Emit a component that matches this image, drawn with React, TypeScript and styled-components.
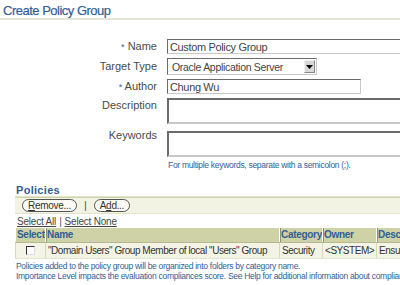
import styled, { createGlobalStyle } from "styled-components";

const GlobalStyle = createGlobalStyle`
  body {
    margin: 0;
    background: #ffffff;
    font-family: "Liberation Sans", Arial, sans-serif;
    color: #222222;
  }
`;

const blue = "#2f5f94";

export default function App() {
  return (
    <Page>
      <GlobalStyle />
      <Title>Create Policy Group</Title>

      <Form>
        <Label>
          <Req>*</Req> Name
        </Label>
        <TextInput $width={300} defaultValue="Custom Policy Group" />

        <Label>Target Type</Label>
        <Select>
          <SelectValue>Oracle Application Server</SelectValue>
          <SelectButton>
            <svg width="7" height="4" viewBox="0 0 7 4">
              <path d="M0 0h7L3.5 4z" fill="#000" />
            </svg>
          </SelectButton>
        </Select>

        <Label>
          <Req>*</Req> Author
        </Label>
        <TextInput $width={194} defaultValue="Chung Wu" />

        <Label $top>Description</Label>
        <TextArea $width={300} />

        <Label $top>Keywords</Label>
        <FieldStack>
          <TextArea $width={300} />
          <Hint>For multiple keywords, separate with a semicolon (;).</Hint>
        </FieldStack>
      </Form>

      <Section>
        <SectionTitle>Policies</SectionTitle>
        <Toolbar>
          <PillButton>
            <u>R</u>emove...
          </PillButton>
          <Divider>|</Divider>
          <PillButton>
            A<u>d</u>d...
          </PillButton>
        </Toolbar>
        <SelectLinks>
          <a>Select All</a>
          <span>|</span>
          <a>Select None</a>
        </SelectLinks>
        <Table>
          <thead>
            <tr>
              <Th $w={30}>Select</Th>
              <Th $w={234}>Name</Th>
              <Th $w={43}>Category</Th>
              <Th $w={54}>Owner</Th>
              <Th $w={80}>Description</Th>
            </tr>
          </thead>
          <tbody>
            <tr>
              <Td $center>
                <Check />
              </Td>
              <Td>"Domain Users" Group Member of local "Users" Group</Td>
              <Td>Security</Td>
              <Td>&lt;SYSTEM&gt;</Td>
              <Td>Ensures</Td>
            </tr>
          </tbody>
        </Table>
        <Notes>
          <Note>
            Policies added to the policy group will be organized into folders by category name.
          </Note>
          <Note>
            Importance Level impacts the evaluation compliances score. See Help for additional
            information about compliance score.
          </Note>
        </Notes>
      </Section>
    </Page>
  );
}

const Page = styled.div`
  width: 400px;
  height: 285px;
  overflow: hidden;
`;

const Title = styled.h1`
  margin: 0;
  padding: 3px 0 0 3px;
  height: 15px;
  font-size: 13px;
  font-weight: normal;
  letter-spacing: -0.5px;
  line-height: 15px;
  color: ${blue};
  -webkit-text-stroke: 0.2px ${blue};
  border-bottom: 2px solid #e6e6d8;
  white-space: nowrap;
`;

const Form = styled.div`
  display: grid;
  grid-template-columns: 157px 1fr;
  column-gap: 10px;
  row-gap: 4px;
  padding-top: 19px;
  align-items: center;
`;

const Label = styled.div<{ $top?: boolean }>`
  text-align: right;
  font-size: 11px;
  color: #4a4a4a;
  white-space: nowrap;
  align-self: ${(p) => (p.$top ? "start" : "center")};
  padding-top: ${(p) => (p.$top ? "1px" : "0")};
  margin-top: ${(p) => (p.$top ? "0" : "-1px")};
`;

const Req = styled.span`
  color: ${blue};
  font-size: 9px;
`;

const TextInput = styled.input<{ $width: number }>`
  box-sizing: border-box;
  width: ${(p) => p.$width}px;
  height: 15px;
  margin: 0;
  padding: 0 2px;
  font: 11px "Liberation Sans", Arial, sans-serif;
  letter-spacing: -0.35px;
  color: #444444;
  border: 1px solid #c8c8c8;
  border-top-color: #6b6b6b;
  border-left-color: #6b6b6b;
  outline: none;
`;

const Select = styled.div`
  box-sizing: border-box;
  width: 150px;
  height: 17px;
  display: flex;
  align-items: center;
  justify-content: space-between;
  border: 1px solid #c8c8c8;
  border-top-color: #6b6b6b;
  border-left-color: #6b6b6b;
  padding-left: 4px;
  padding-right: 1px;
`;

const SelectValue = styled.span`
  font-size: 10.5px;
  letter-spacing: -0.3px;
  color: #444444;
  white-space: nowrap;
`;

const SelectButton = styled.span`
  box-sizing: border-box;
  width: 11px;
  height: 13px;
  display: flex;
  align-items: center;
  justify-content: center;
  background: #d8d8d8;
  border: 1px solid #888888;
  border-top-color: #f0f0f0;
  border-left-color: #f0f0f0;
`;

const TextArea = styled.textarea<{ $width: number }>`
  box-sizing: border-box;
  display: block;
  width: ${(p) => p.$width}px;
  height: 26px;
  margin: 0;
  resize: none;
  border: 2px solid #c8c8c8;
  border-top-color: #6b6b6b;
  border-left-color: #6b6b6b;
  outline: none;
`;

const FieldStack = styled.div`
  display: flex;
  flex-direction: column;
  gap: 3px;
  margin-top: 3px;
`;

const Hint = styled.div`
  font-size: 8.5px;
  letter-spacing: -0.3px;
  color: ${blue};
  white-space: nowrap;
  padding-left: 1px;
`;

const Section = styled.div`
  padding: 14px 0 0 15px;
`;

const SectionTitle = styled.h2`
  margin: 0 0 0 1px;
  font-size: 11px;
  font-weight: bold;
  letter-spacing: 0.3px;
  color: ${blue};
  line-height: 12px;
`;

const Toolbar = styled.div`
  display: flex;
  align-items: center;
  gap: 7px;
  height: 14px;
  padding: 1px 0 1px 7px;
  background: #f3f3e3;
  border-top: 1px solid #e2e4cc;
  box-shadow: inset 0 1px 0 #cfd4a8;
  border-bottom: 1px solid #e2e4cc;
`;

const PillButton = styled.span`
  display: inline-flex;
  align-items: center;
  height: 11px;
  padding: 0 5px;
  border: 1px solid #555555;
  border-radius: 7px;
  font-size: 10px;
  letter-spacing: -0.3px;
  color: #333333;
  background: #fbfbf4;
  white-space: nowrap;
`;

const Divider = styled.span`
  font-size: 11px;
  color: #555555;
`;

const SelectLinks = styled.div`
  display: flex;
  align-items: center;
  gap: 3px;
  padding: 1px 0 0 2px;
  height: 13px;
  font-size: 10px;
  letter-spacing: -0.2px;
  color: #555555;
  white-space: nowrap;
  a {
    text-decoration: underline;
    color: #444444;
  }
`;

const Table = styled.table`
  border-collapse: collapse;
  table-layout: fixed;
  width: 441px;
`;

const Th = styled.th<{ $w: number }>`
  box-sizing: border-box;
  width: ${(p) => p.$w}px;
  height: 14px;
  padding: 0 1px;
  text-align: left;
  font-size: 10px;
  font-weight: bold;
  letter-spacing: -0.3px;
  color: ${blue};
  background: #cfd1a7;
  border-left: 1px solid #ffffff;
  border-bottom: 1px solid #b5b88c;
  box-shadow: inset 1px 0 0 #8b9576;
  white-space: nowrap;
  overflow: hidden;
  &:first-child {
    box-shadow: none;
  }
`;

const Td = styled.td<{ $center?: boolean }>`
  box-sizing: border-box;
  height: 16px;
  padding: 0 2px;
  font-size: 10px;
  letter-spacing: -0.45px;
  color: #333333;
  background: #f4f4e6;
  border-left: 1px solid #d6d8b8;
  border-bottom: 1px solid #e2e4cc;
  text-align: ${(p) => (p.$center ? "center" : "left")};
  white-space: nowrap;
  overflow: hidden;
`;

const Check = styled.span`
  display: inline-block;
  width: 9px;
  height: 9px;
  box-sizing: border-box;
  vertical-align: middle;
  background: #ffffff;
  border: 1px solid #dddddd;
  border-top-color: #333333;
  border-left-color: #333333;
`;

const Notes = styled.div`
  padding-top: 2px;
`;

const Note = styled.div`
  font-size: 8.5px;
  line-height: 10px;
  letter-spacing: -0.3px;
  color: ${blue};
  white-space: nowrap;
  margin-left: 1px;
`;
